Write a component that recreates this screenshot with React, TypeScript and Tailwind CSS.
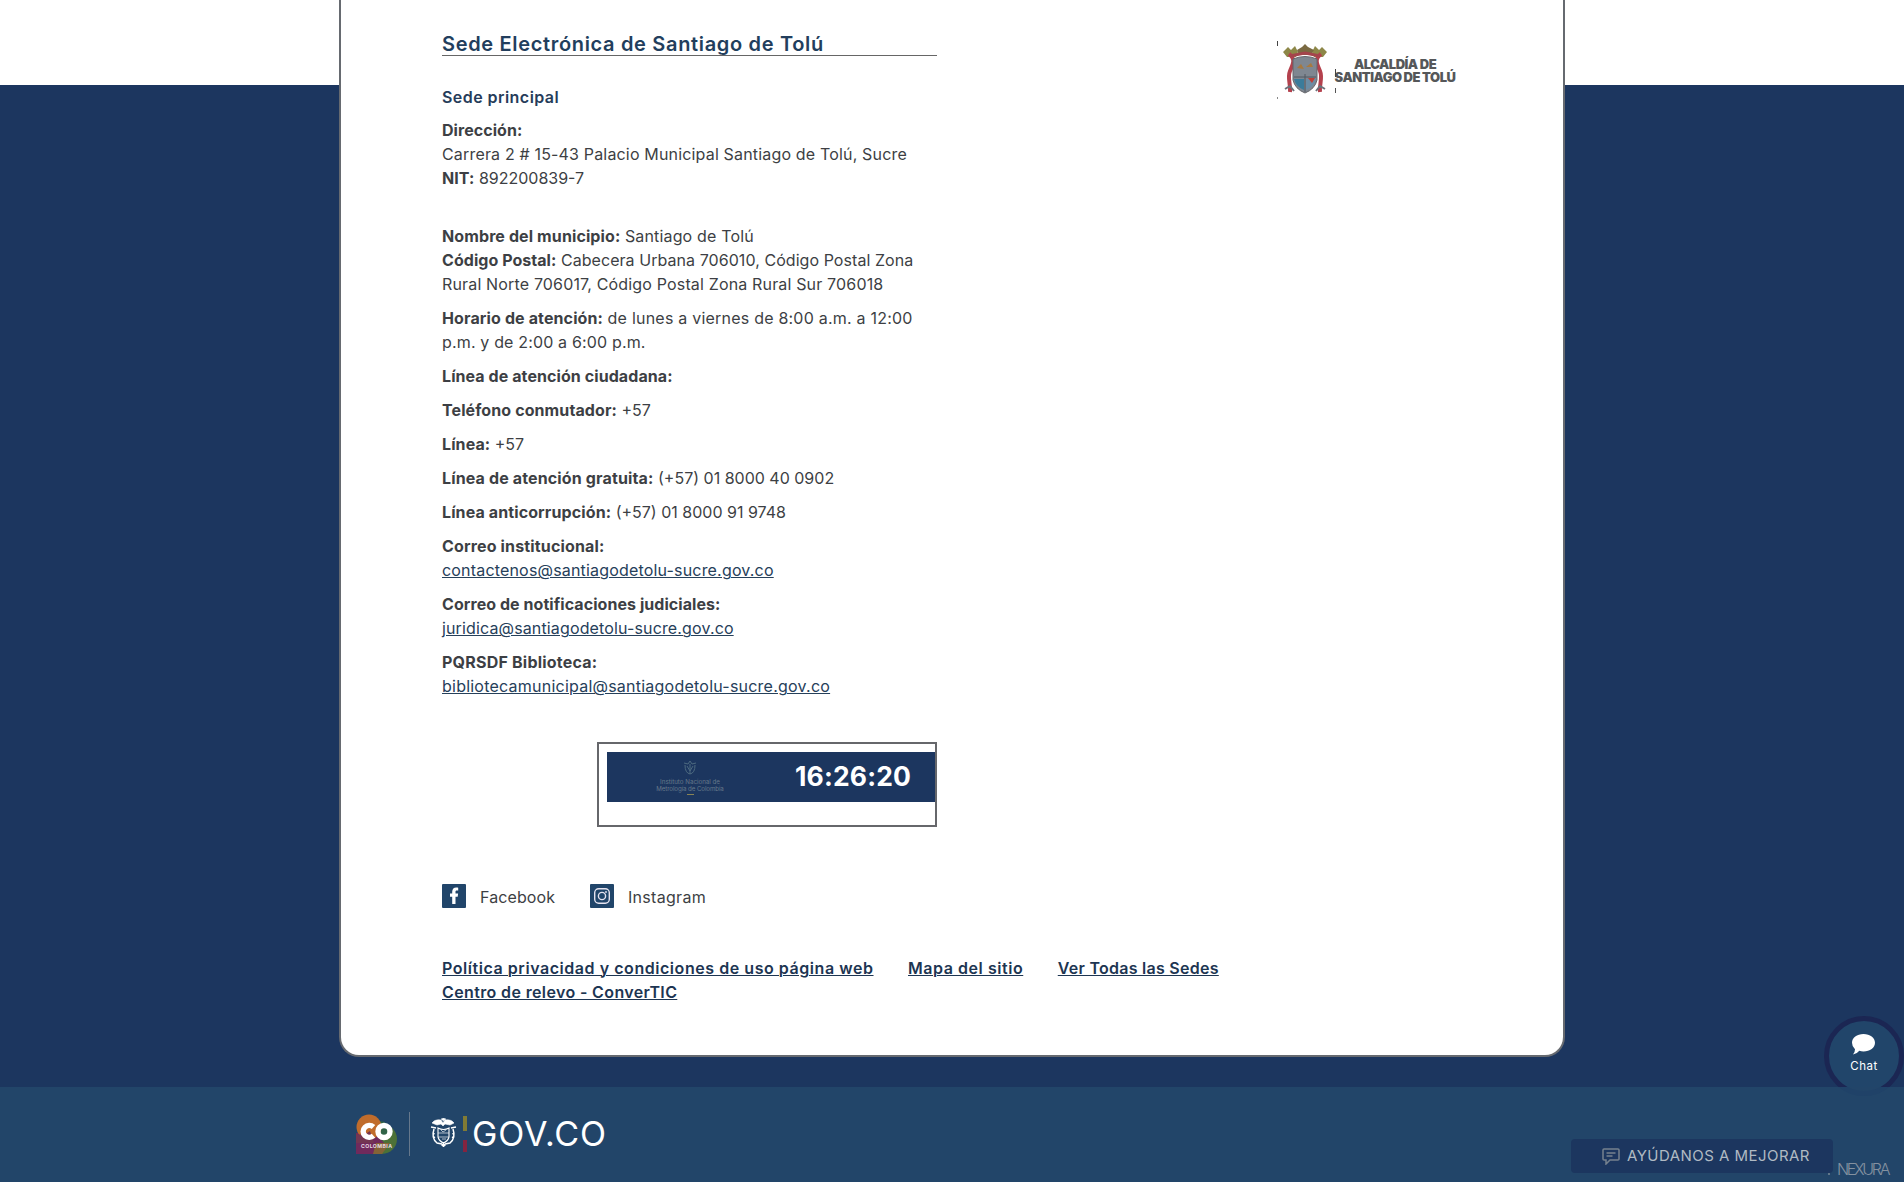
import type { ReactNode } from "react";

const contacts = [
  { label: "Línea de atención ciudadana:", value: "", tone: "tracking-[0.08px]" },
  { label: "Teléfono conmutador:", value: "+57", tone: "tracking-[0.1px]" },
  { label: "Línea:", value: "+57", tone: "tracking-[0.1px]" },
  { label: "Línea de atención gratuita:", value: "(+57) 01 8000 40 0902", tone: "tracking-[0.14px]" },
  { label: "Línea anticorrupción:", value: "(+57) 01 8000 91 9748", tone: "tracking-[0.11px]" },
];

const mails = [
  { label: "Correo institucional:", mail: "contactenos@santiagodetolu-sucre.gov.co", tone: "tracking-[0.15px]", mailTone: "tracking-[0.18px]" },
  { label: "Correo de notificaciones judiciales:", mail: "juridica@santiagodetolu-sucre.gov.co", tone: "tracking-[0.06px]", mailTone: "tracking-[0.14px]" },
  { label: "PQRSDF Biblioteca:", mail: "bibliotecamunicipal@santiagodetolu-sucre.gov.co", tone: "tracking-[0.22px]", mailTone: "tracking-[0.23px]" },
];

function Label({ children }: { children: ReactNode }) {
  return <b className="font-bold tracking-[0.05px]">{children}</b>;
}

function TownCrest() {
  return (
    <svg width="48" height="50" viewBox="0 0 48 50" fill="none">
      <g fill="#8d8748">
        <path d="M2 8l5-5 3 3 4-4 3 6-2 5H6z" />
        <path d="M46 8l-5-5-3 3-4-4-3 6 2 5h9z" />
        <path d="M16 6l5-3 3-3 3 3 6 3-3 5H18z" fill="#7b6a42" />
      </g>
      <path d="M8 10c7 5 4 10 1 17s1 14 0 21" stroke="#b4414d" strokeWidth="4" />
      <path d="M40 10c-7 5-4 10-1 17s-1 14 0 21" stroke="#b4414d" strokeWidth="4" />
      <path d="M9 12l15-3 15 3" stroke="#a4444c" strokeWidth="3" />
      <path d="M4 45l5-3 4 5M44 45l-5-3-4 5" stroke="#6c7079" strokeWidth="2" />
      <path d="M12 15q12-5 24 0v21q-2 9-12 13-10-4-12-13z" fill="#7f8791" stroke="#64656a" />
      <path d="M13 35h10v11q-8-3-10-11z" fill="#3b7c9b" />
      <path d="M25 35h10q-2 8-10 11z" fill="#6c8da5" />
      <path d="M27 34h7l-3 5z" fill="#bd4139" />
      <path d="M16 24l4-4 3 5zM25 23l5-4 2 4z" fill="#a8793f" />
      <path d="M24 30v18M13 33h22" stroke="#535961" />
    </svg>
  );
}

function CityLogo() {
  return (
    <div className="relative flex h-[58px] w-[180px] text-[#555759]">
      <span className="absolute left-0 top-0 h-[5px] w-px bg-[#444]" />
      <span className="absolute bottom-0 left-0 h-[2px] w-px bg-[#888]" />
      <div className="ml-[4px] mt-[3px]">
        <TownCrest />
      </div>
      <div className="ml-[4px] mt-[17px] flex w-[124px] flex-col items-center whitespace-nowrap text-[13px] font-black leading-[13px]">
        <span className="tracking-[-0.5px]">ALCALDÍA DE</span>
        <span className="tracking-[-0.5px]">SANTIAGO DE TOLÚ</span>
      </div>
      <span className="absolute left-[58px] top-[28px] h-[8px] w-px bg-[#444]" />
      <span className="absolute left-[58px] top-[47px] h-[5px] w-px bg-[#555]" />
    </div>
  );
}

function ClockCrest() {
  return (
    <svg width="16" height="16" viewBox="0 0 16 16" fill="none" stroke="#4d6a80" strokeWidth="1">
      <path d="M2 3l4 1 2-3 2 3 4-1M3 5q0 8 5 9 5-1 5-9M5 6l3 5 3-5M8 4v10" />
    </svg>
  );
}

function ColombiaMark() {
  return (
    <svg width="42" height="42" viewBox="0 0 42 42">
      <circle cx="26" cy="25" r="15" fill="#4c7137" />
      <circle cx="24" cy="17" r="10" fill="#306347" />
      <path d="M0 19h19l10 11-7 10H0z" fill="#702a5c" />
      <path d="M20 29h14l-8 11h-9z" fill="#846336" />
      <circle cx="13" cy="13" r="12.5" fill="#c06c2b" />
      <path d="M0 20q8 2 14-3l4 12H0z" fill="#733652" />
      <g fill="none" stroke="#fff" strokeWidth="5.4">
        <path d="M17.5 13a6.200 5.900 0 1 0 0 8.800" />
        <circle cx="28" cy="17.500" r="6" />
      </g>
      <text x="5" y="33.500" fill="#e6dce2" fontSize="5.200" fontWeight="700" textLength="31" fontFamily="Inter, sans-serif">
        COLOMBIA
      </text>
    </svg>
  );
}

function NationalArms() {
  return (
    <svg width="27" height="30" viewBox="0 0 27 30" fill="none" stroke="#fff" strokeWidth="1.5">
      <path d="M2 5q3-4 9-3l2 3 2-3q6-1 9 3l-4 2-5-1-2 2-2-2-4 1z" fill="#fff" strokeWidth=".6" />
      <path d="M11 1l2.500-1L16 1l-2.500 2z" fill="#fff" strokeWidth=".4" />
      <path d="M1 9l5 1M26 9l-5 1M4 11q-3 9 3 14l5 1M23 11q3 9-3 14l-5 1M2.500 15l2 1M24.500 15l-2 1M3 20l2-1M24 20l-2-1" />
      <path d="M8 10q5.500 3 11 0v9q-1 4-5.500 6Q9 23 8 19z" strokeWidth="1.100" />
      <path d="M8 15h11M8 19h11M11 12l2 2 3-2M12 21h4" strokeWidth=".9" strokeOpacity=".7" />
      <path d="M13.500 24v5M11.500 27h4" strokeWidth="1.800" />
    </svg>
  );
}

function FacebookIcon() {
  return (
    <svg width="24" height="24" viewBox="0 0 24 24">
      <rect width="24" height="24" rx="1" fill="#21456a" />
      <path
        d="M10.200 20v-7.300H8V9.600h2.200V7.800c0-2.700 1.600-4.200 4-4.200.9 0 1.700.1 2 .1v2.700h-1.400c-1.100 0-1.300.6-1.300 1.400v1.800h2.600l-.4 3.100h-2.200V20z"
        fill="#fff"
      />
    </svg>
  );
}

function InstagramIcon() {
  return (
    <svg width="24" height="24" viewBox="0 0 24 24" fill="none" stroke="#e6e3f0" strokeWidth="1.400">
      <rect width="24" height="24" rx="1" fill="#21456a" stroke="none" />
      <rect x="4.700" y="4.700" width="14.600" height="14.600" rx="4" />
      <circle cx="12" cy="12" r="3.600" />
      <circle cx="16" cy="8" r=".9" fill="#e6e3f0" stroke="none" />
    </svg>
  );
}

function FooterLink({ children, className }: { children: ReactNode; className: string }) {
  return (
    <a href="#" className={`font-semibold text-[#1d3552] underline decoration-1 underline-offset-1 ${className}`}>
      {children}
    </a>
  );
}

export default function App() {
  return (
    <div className="h-[1194px] overflow-hidden bg-white font-['Inter',sans-serif] text-base leading-6 text-[#3d3f44]">
      <main className="relative h-[1087px] overflow-hidden bg-[linear-gradient(#fff_85px,#1c365f_85px)]">
        <section className="mx-auto flex h-[1057px] w-[1226px] flex-col rounded-b-[20px] border-2 border-t-0 border-[#666a70] bg-white pl-[101px] pr-[106px]">
          <div className="flex justify-between">
            <div className="w-[495px] whitespace-nowrap">
              <h1 className="mt-8 h-6 border-b border-[#666] text-[20px] font-semibold leading-6 tracking-[0.67px] text-[#223e5d]">
                Sede Electrónica de Santiago de Tolú
              </h1>
              <h2 className="mt-[29px] font-semibold tracking-[0.45px] text-[#263c5a]">Sede principal</h2>
              <p className="mt-[9px]">
                <Label>Dirección:</Label>
                <br />
                <span className="tracking-[0.17px]">Carrera 2 # 15-43 Palacio Municipal Santiago de Tolú, Sucre</span>
                <br />
                <Label>NIT:</Label> 892200839-7
              </p>
              <p className="mt-[34px]">
                <span className="font-bold tracking-[0.11px]">Nombre del municipio:</span>{" "}
                <span className="tracking-[0.16px]">Santiago de Tolú</span>
                <br />
                <Label>Código Postal:</Label>{" "}
                <span className="tracking-[0.06px]">Cabecera Urbana 706010, Código Postal Zona</span>
                <br />
                <span className="tracking-[0.16px]">Rural Norte 706017, Código Postal Zona Rural Sur 706018</span>
              </p>
              <p className="mt-2.5">
                <span className="font-bold tracking-[0.12px]">Horario de atención:</span>{" "}
                <span className="tracking-[0.22px]">de lunes a viernes de 8:00 a.m. a 12:00</span>
                <br />
                <span className="tracking-[0.16px]">p.m. y de 2:00 a 6:00 p.m.</span>
              </p>
              {contacts.map((c) => (
                <p key={c.label} className="mt-2.5">
                  <b className={`font-bold ${c.tone}`}>{c.label}</b> {c.value}
                </p>
              ))}
              {mails.map((m) => (
                <p key={m.label} className="mt-2.5">
                  <b className={`font-bold ${m.tone}`}>{m.label}</b>
                  <br />
                  <a href="#" className={`text-[#26405a] underline decoration-1 underline-offset-1 ${m.mailTone}`}>
                    {m.mail}
                  </a>
                </p>
              ))}
              <div className="ml-auto mt-[44px] h-[85px] w-[340px] border-2 border-[#66676b] pl-2 pt-2">
                <div className="flex h-[50px] items-center bg-[#1c365f]">
                  <div className="ml-[48px] flex w-[70px] flex-col items-center text-[6.2px] leading-[7px] text-[#66798a]">
                    <ClockCrest />
                    <span className="mt-[2px]">Instituto Nacional de</span>
                    <span className="tracking-[-0.1px]">Metrología de Colombia</span>
                    <span className="mt-[2px] h-px w-[7px] bg-[#898455]" />
                  </div>
                  <time className="ml-[70px] -translate-y-px text-[26.5px] font-bold tracking-[0.15px] text-white">16:26:20</time>
                </div>
              </div>
            </div>
            <div className="pt-[41px]">
              <CityLogo />
            </div>
          </div>

          <div className="mt-[57px] flex h-6 tracking-[0.1px]">
            <a href="#" className="flex w-[148px]">
              <FacebookIcon />
              <span className="ml-[14px] translate-y-px">Facebook</span>
            </a>
            <a href="#" className="flex">
              <InstagramIcon />
              <span className="ml-[14px] translate-y-px tracking-[0.3px]">Instagram</span>
            </a>
          </div>

          <nav className="mt-[48px] flex w-[820px] flex-wrap gap-x-[34.500px] whitespace-nowrap">
            <FooterLink className="tracking-[0.55px]">Política privacidad y condiciones de uso página web</FooterLink>
            <FooterLink className="tracking-[0.55px]">Mapa del sitio</FooterLink>
            <FooterLink className="tracking-[0.27px]">Ver Todas las Sedes</FooterLink>
            <FooterLink className="tracking-[0.37px]">Centro de relevo - ConverTIC</FooterLink>
          </nav>
        </section>

        <button className="absolute left-[1824px] top-[1016px] flex size-20 flex-col items-center rounded-full border-[5px] border-[#1b2653] bg-[#21456a] pt-[13px] text-white">
          <svg width="25" height="21" viewBox="0 0 25 21" fill="#fff" className="-translate-x-px">
            <path d="M12.500 0C19 0 24 3.800 24 8.700s-5 8.700-11.500 8.700c-1.500 0-2.900-.2-4.200-.6Q6 20 2 20.500q2-2.200 2-5.200Q1 12.700 1 8.700C1 3.800 6 0 12.500 0z" />
          </svg>
          <span className="translate-y-px text-[11.500px] leading-[20px] tracking-[0.5px]">Chat</span>
        </button>
      </main>

      <footer className="relative flex h-[95px] overflow-hidden bg-[#224569] pl-[356px]">
        <span className="absolute left-[1824px] top-[-71px] size-20 rounded-full border-[5px] border-[#204268]" />
        <div className="mt-[27px]">
          <ColombiaMark />
        </div>
        <span className="ml-[11px] mt-[25px] h-[44px] w-px bg-[#66788c]" />
        <div className="ml-[20px] mt-[31px]">
          <NationalArms />
        </div>
        <div className="ml-[6px] mt-[29px] flex w-[4px] flex-col">
          <span className="h-[15px] bg-[#817b35]" />
          <span className="h-[9px] bg-[#22436f]" />
          <span className="h-[12px] bg-[#832440]" />
        </div>
        <span className="ml-[5px] mt-[26px] text-[34px] leading-[41px] tracking-[0.9px] text-white">GOV.CO</span>

        <button className="absolute left-[1571px] top-[52px] flex h-[34px] w-[262px] items-center rounded-[4px] bg-[#1c365f] pl-[31px] text-[15px] text-[#b0bac3]">
          <svg width="18" height="17" viewBox="0 0 18 17" fill="none" stroke="#75818e" strokeWidth="1.500">
            <path d="M2 1h14q1 0 1 1v9q0 1-1 1H8l-4 4v-4H2q-1 0-1-1V2q0-1 1-1zM4.500 5h9M4.500 8h6" />
          </svg>
          <span className="ml-[7px] whitespace-nowrap tracking-[0.46px]">AYÚDANOS A MEJORAR</span>
        </button>
        <span className="absolute left-[1828px] top-[86px] size-[2px] bg-[#62788b]" />
        <span className="absolute left-[1837px] top-[70px] text-[16px] font-light tracking-[-2.300px] text-[#8491a0]">NEXURA</span>
      </footer>
    </div>
  );
}
